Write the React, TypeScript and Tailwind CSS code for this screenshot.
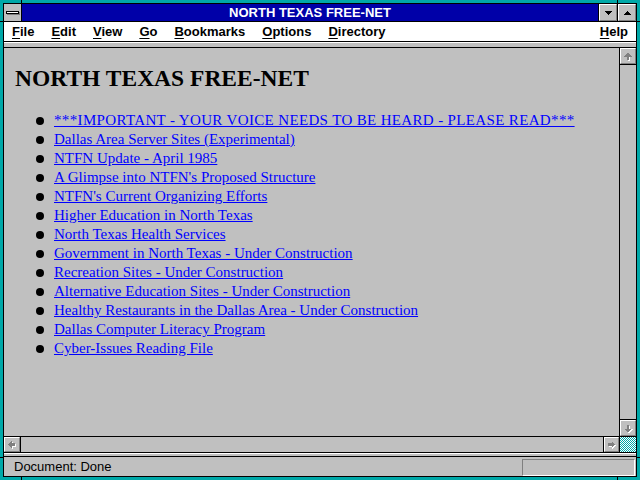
import React from "react";

const sans = "font-['Liberation_Sans',Arial,sans-serif]";
const serif = "font-['Liberation_Serif','Times_New_Roman',serif]";

const links = [
  "***IMPORTANT - YOUR VOICE NEEDS TO BE HEARD - PLEASE READ***",
  "Dallas Area Server Sites (Experimental)",
  "NTFN Update - April 1985",
  "A Glimpse into NTFN's Proposed Structure",
  "NTFN's Current Organizing Efforts",
  "Higher Education in North Texas",
  "North Texas Health Services",
  "Government in North Texas - Under Construction",
  "Recreation Sites - Under Construction",
  "Alternative Education Sites - Under Construction",
  "Healthy Restaurants in the Dallas Area - Under Construction",
  "Dallas Computer Literacy Program",
  "Cyber-Issues Reading File",
];

const menus = [
  ["F", "ile"],
  ["E", "dit"],
  ["V", "iew"],
  ["G", "o"],
  ["B", "ookmarks"],
  ["O", "ptions"],
  ["D", "irectory"],
];

// greyed-out scroll arrow, white shadow bottom-right
function ScrollArrow({ dir }: { dir: "up" | "down" | "left" | "right" }) {
  const rot = { up: 0, right: 90, down: 180, left: 270 }[dir];
  const d = "M7.5 3 L12 7.5 L9 7.5 L9 11 L6 11 L6 7.5 L3 7.5 Z";
  return (
    <svg width="15" height="15" viewBox="0 0 15 15" shapeRendering="crispEdges">
      <g transform="translate(1 1)">
        <path d={d} fill="#ffffff" transform={`rotate(${rot} 7.5 7.5)`} />
      </g>
      <path d={d} fill="#808080" transform={`rotate(${rot} 7.5 7.5)`} />
    </svg>
  );
}

function Bevel({ children }: { children: React.ReactNode }) {
  return (
    <div className="w-full h-full bg-[#c0c0c0] border border-t-white border-l-white border-b-[#808080] border-r-[#808080] flex items-center justify-center">
      {children}
    </div>
  );
}

function Tri({ up }: { up?: boolean }) {
  return (
    <svg width="7" height="4" viewBox="0 0 7 4" shapeRendering="crispEdges">
      <path d={up ? "M3.5 0 L7 4 L0 4 Z" : "M0 0 L7 0 L3.5 4 Z"} fill="#000" />
    </svg>
  );
}

export default function App() {
  return (
    <div className={`relative w-[640px] h-[480px] bg-[#00a8a8] p-[3px] overflow-hidden ${sans}`}>
      {/* resize corner ticks */}
      <div className="absolute top-0 left-[21px] w-px h-[3px] bg-black" />
      <div className="absolute top-0 left-[617px] w-px h-[3px] bg-black" />
      <div className="absolute bottom-0 left-[21px] w-px h-[3px] bg-black" />
      <div className="absolute bottom-0 left-[617px] w-px h-[3px] bg-black" />
      <div className="absolute left-0 top-[21px] h-px w-[3px] bg-black" />
      <div className="absolute left-0 top-[457px] h-px w-[3px] bg-black" />
      <div className="absolute right-0 top-[21px] h-px w-[3px] bg-black" />
      <div className="absolute right-0 top-[457px] h-px w-[3px] bg-black" />

      <div className="h-full border border-black flex flex-col bg-[#c0c0c0]">
        {/* Title bar */}
        <div className="flex h-[18px] border-b border-black shrink-0">
          <div className="w-[18px] border-r border-black bg-[#c0c0c0] flex items-center justify-center">
            <div className="w-[13px] h-[3px] bg-white border border-black shadow-[1px_1px_0_#808080]" />
          </div>
          <div className="flex-1 bg-[#0000a8] text-white font-bold text-[13px] leading-[17px] text-center">
            NORTH TEXAS FREE-NET
          </div>
          <div className="w-[19px] border-l border-black">
            <Bevel>
              <Tri />
            </Bevel>
          </div>
          <div className="w-[19px] border-l border-black">
            <Bevel>
              <Tri up />
            </Bevel>
          </div>
        </div>

        {/* Menu bar */}
        <div className="flex h-[20px] border-b border-black bg-white text-black font-bold text-[13px] leading-[19px] pl-[8px] pr-[8px] gap-[17px] shrink-0">
          {menus.map(([k, rest]) => (
            <span key={k + rest}>
              <span className="underline underline-offset-[2px]">{k}</span>
              {rest}
            </span>
          ))}
          <span className="ml-auto">
            <span className="underline underline-offset-[2px]">H</span>elp
          </span>
        </div>

        {/* collapsed toolbar strip */}
        <div className="h-[6px] border-t border-t-white border-b border-b-black bg-[#c0c0c0] shrink-0" />

        {/* Page + vertical scrollbar */}
        <div className="flex flex-1 min-h-0">
          <div className={`flex-1 border-r border-black overflow-hidden ${serif}`}>
            <h1 className="mt-[16px] pl-[11px] text-[23.5px] leading-[28px] font-bold text-black">
              NORTH TEXAS FREE-NET
            </h1>
            <ul className="mt-[19px] pl-[32px]">
              {links.map((t, i) => (
                <li key={t} className="flex items-center h-[19px] gap-[10px]">
                  <span className="w-2 h-2 rounded-full bg-black shrink-0" />
                  <a
                    href="#"
                    className={`text-[15px] leading-[19px] text-[#0000ff] underline underline-offset-[1px] whitespace-nowrap ${
                      i === 0 ? "tracking-[0.35px]" : ""
                    }`}
                  >
                    {t}
                  </a>
                </li>
              ))}
            </ul>
          </div>
          <div className="w-[16px] flex flex-col">
            <div className="h-[17px] border-b border-black">
              <Bevel>
                <ScrollArrow dir="up" />
              </Bevel>
            </div>
            <div className="flex-1" />
            <div className="h-[17px] border-t border-black">
              <Bevel>
                <ScrollArrow dir="down" />
              </Bevel>
            </div>
          </div>
        </div>

        {/* Horizontal scrollbar */}
        <div className="flex h-[17px] border-t border-b border-black shrink-0">
          <div className="w-[17px] border-r border-black">
            <Bevel>
              <ScrollArrow dir="left" />
            </Bevel>
          </div>
          <div className="flex-1" />
          <div className="w-[17px] border-l border-r border-black">
            <Bevel>
              <ScrollArrow dir="right" />
            </Bevel>
          </div>
          <div className="w-[16px]">
            <svg width="16" height="15" viewBox="0 0 16 15" shapeRendering="crispEdges">
              <defs>
                <pattern id="chk" width="2" height="2" patternUnits="userSpaceOnUse">
                  <rect width="2" height="2" fill="#00a8a8" />
                  <rect x="1" y="1" width="1" height="1" fill="#ffffff" />
                  <rect x="0" y="0" width="1" height="1" fill="#ffffff" />
                </pattern>
              </defs>
              <rect width="16" height="15" fill="url(#chk)" />
            </svg>
          </div>
        </div>

        {/* strip */}
        <div className="h-[4px] border-t border-t-white border-b border-b-black bg-[#c0c0c0] shrink-0" />

        {/* Status bar */}
        <div className="flex h-[19px] items-end shrink-0">
          <span className="self-center pl-[10px] text-[13px] leading-[19px] text-black">Document: Done</span>
          <div className="ml-auto mr-[1px] w-[113px] h-[17px] border border-t-[#808080] border-l-[#808080] border-b-white border-r-white" />
        </div>
      </div>
    </div>
  );
}
